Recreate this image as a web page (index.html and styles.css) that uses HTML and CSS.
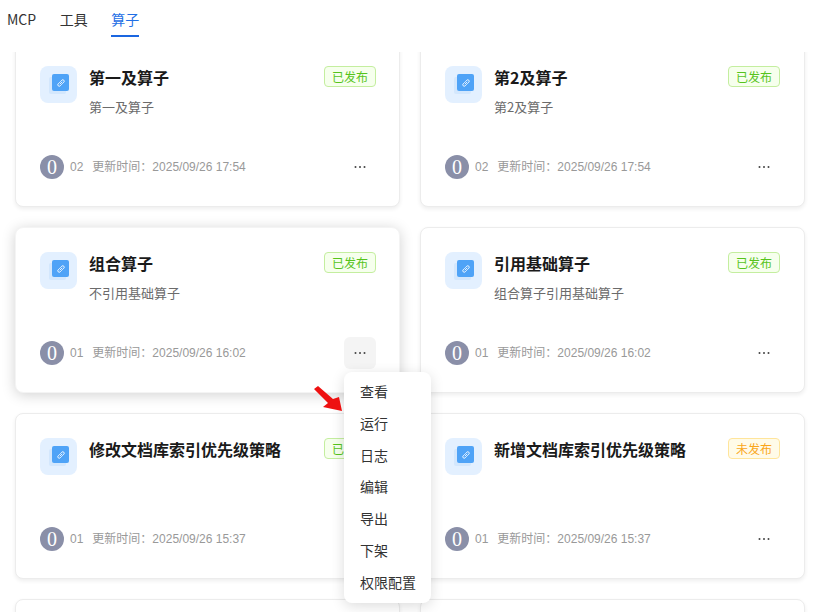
FILE: index.html
```html
<!DOCTYPE html>
<html lang="zh">
<head>
<meta charset="utf-8">
<title>算子</title>
<link rel="stylesheet" href="styles.css">
</head>
<body>
<svg class="defs" width="0" height="0" aria-hidden="true">
  <symbol id="link" viewBox="0 0 12 12">
    <path d="M4.800 7.200 7.200 4.800M4.800 5.200 3.200 6.800a1.400 1.400 0 0 0 2 2L6.800 7.200M7.200 6.800 8.800 5.200a1.400 1.400 0 0 0-2-2L5.200 4.800" fill="none" stroke="#fff" stroke-width="0.900"/>
  </symbol>
  <symbol id="dots" viewBox="0 0 12 4">
    <circle cx="1.500" cy="2" r="1" fill="#444"/>
    <circle cx="6" cy="2" r="1" fill="#444"/>
    <circle cx="10.500" cy="2" r="1" fill="#444"/>
  </symbol>
</svg>
<div class="page">
  <nav class="tabs">
    <span class="tab">MCP</span>
    <span class="tab">工具</span>
    <span class="tab active">算子</span>
  </nav>
  <main class="viewport">
    <div class="grid">
      <article class="card">
        <div class="top">
          <div class="icon"><span class="icon-back"></span><span class="icon-front"><svg width="12" height="12"><use href="#link"/></svg></span></div>
          <div class="info"><h3 class="name">第一及算子</h3><p class="desc">第一及算子</p></div>
          <span class="badge on">已发布</span>
        </div>
        <div class="foot"><span class="avatar">0</span><span class="ver">02</span><span class="time">更新时间：2025/09/26 17:54</span><span class="more"><svg width="12" height="4"><use href="#dots"/></svg></span></div>
      </article>
      <article class="card">
        <div class="top">
          <div class="icon"><span class="icon-back"></span><span class="icon-front"><svg width="12" height="12"><use href="#link"/></svg></span></div>
          <div class="info"><h3 class="name">第2及算子</h3><p class="desc">第2及算子</p></div>
          <span class="badge on">已发布</span>
        </div>
        <div class="foot"><span class="avatar">0</span><span class="ver">02</span><span class="time">更新时间：2025/09/26 17:54</span><span class="more"><svg width="12" height="4"><use href="#dots"/></svg></span></div>
      </article>
      <article class="card hover">
        <div class="top">
          <div class="icon"><span class="icon-back"></span><span class="icon-front"><svg width="12" height="12"><use href="#link"/></svg></span></div>
          <div class="info"><h3 class="name">组合算子</h3><p class="desc">不引用基础算子</p></div>
          <span class="badge on">已发布</span>
        </div>
        <div class="foot"><span class="avatar">0</span><span class="ver">01</span><span class="time">更新时间：2025/09/26 16:02</span><span class="more open"><svg width="12" height="4"><use href="#dots"/></svg></span></div>
      </article>
      <article class="card">
        <div class="top">
          <div class="icon"><span class="icon-back"></span><span class="icon-front"><svg width="12" height="12"><use href="#link"/></svg></span></div>
          <div class="info"><h3 class="name">引用基础算子</h3><p class="desc">组合算子引用基础算子</p></div>
          <span class="badge on">已发布</span>
        </div>
        <div class="foot"><span class="avatar">0</span><span class="ver">01</span><span class="time">更新时间：2025/09/26 16:02</span><span class="more"><svg width="12" height="4"><use href="#dots"/></svg></span></div>
      </article>
      <article class="card">
        <div class="top">
          <div class="icon"><span class="icon-back"></span><span class="icon-front"><svg width="12" height="12"><use href="#link"/></svg></span></div>
          <div class="info"><h3 class="name">修改文档库索引优先级策略</h3><p class="desc"></p></div>
          <span class="badge on">已发布</span>
        </div>
        <div class="foot"><span class="avatar">0</span><span class="ver">01</span><span class="time">更新时间：2025/09/26 15:37</span><span class="more"><svg width="12" height="4"><use href="#dots"/></svg></span></div>
      </article>
      <article class="card">
        <div class="top">
          <div class="icon"><span class="icon-back"></span><span class="icon-front"><svg width="12" height="12"><use href="#link"/></svg></span></div>
          <div class="info"><h3 class="name">新增文档库索引优先级策略</h3><p class="desc"></p></div>
          <span class="badge off">未发布</span>
        </div>
        <div class="foot"><span class="avatar">0</span><span class="ver">01</span><span class="time">更新时间：2025/09/26 15:37</span><span class="more"><svg width="12" height="4"><use href="#dots"/></svg></span></div>
      </article>
      <article class="card"></article>
      <article class="card"></article>
    </div>
  </main>
</div>
<ul class="menu">
  <li>查看</li>
  <li>运行</li>
  <li>日志</li>
  <li>编辑</li>
  <li>导出</li>
  <li>下架</li>
  <li>权限配置</li>
</ul>
<svg class="arrow" width="34" height="32" viewBox="0 0 34 32" aria-hidden="true">
  <path d="M4 7 8 4 23 17 29 15 32 29 13 25 18 21Z" fill="#ee1111"/>
</svg>
</body>
</html>
```
FILE: styles.css
```css
* { box-sizing: border-box; }
html, body { margin: 0; height: 100%; overflow: hidden; background: #fff; }
body {
  position: relative;
  font-family: "Noto Sans CJK SC", "Noto Sans", sans-serif;
  color: #262626;
}
.defs { position: absolute; }
.page { display: flex; flex-direction: column; height: 612px; }
.tabs {
  position: relative;
  z-index: 2;
  flex: none;
  height: 52px;
  padding-left: 7px;
  display: flex;
  gap: 23.5px;
  align-items: flex-start;
  background: #fff;
}
.tab {
  height: 37px;
  padding-top: 9px;
  font-size: 14px;
  line-height: 20px;
  color: #333;
}
.tab.active { color: #1f6fe5; border-bottom: 2px solid #1a66e0; }
.viewport { flex: 1; overflow: hidden; }
.grid {
  margin-top: -11px;
  padding: 0 11px 0 15px;
  display: grid;
  grid-template-columns: 385px 385px;
  grid-auto-rows: 166px;
  gap: 20px;
}
.card {
  padding: 24px 23px 0 24px;
  background: #fff;
  border: 1px solid #ececec;
  border-radius: 8px;
  box-shadow: 0 2px 4px rgba(0, 0, 0, 0.07);
  display: flex;
  flex-direction: column;
}
.card:nth-child(even) { padding-right: 24px; }
.card.hover { border-color: #f4f4f4; box-shadow: 0 2px 14px rgba(0, 0, 0, 0.18); }
.top { display: flex; align-items: flex-start; height: 88px; }
.icon {
  position: relative;
  flex: none;
  width: 37px;
  height: 37px;
  border-radius: 8px;
  background: #e3f0ff;
}
.icon-back {
  position: absolute;
  left: 9px;
  top: 11px;
  width: 17px;
  height: 17px;
  border-radius: 2px;
  background: #d3e7fd;
}
.icon-front {
  position: absolute;
  left: 12px;
  top: 8px;
  width: 17px;
  height: 17px;
  border-radius: 2px;
  background: #4fa3f7;
  display: flex;
  align-items: center;
  justify-content: center;
}
.info { flex: 1; margin-left: 12px; min-width: 0; }
.name {
  margin: -1px 0 0;
  font-size: 16px;
  line-height: 24px;
  font-weight: 700;
  color: #1a1a1a;
}
.desc {
  margin: 8px 0 0;
  font-size: 13px;
  line-height: 20px;
  color: #6b6b6b;
}
.badge {
  flex: none;
  width: 52px;
  height: 21px;
  border-radius: 4px;
  border: 1px solid;
  font-size: 12px;
  line-height: 19px;
  text-align: center;
}
.badge.on { color: #56c41c; background: #f6ffed; border-color: #c4ee9f; }
.badge.off { color: #faa61a; background: #fffbe8; border-color: #ffe59b; }
.foot { display: flex; align-items: center; height: 32px; margin-top: -3px; font-family: "Liberation Sans", "Noto Sans CJK SC", sans-serif; font-size: 12px; line-height: 16px; color: #999; }
.avatar {
  flex: none;
  width: 24px;
  height: 24px;
  border-radius: 50%;
  background: #8a8fa8;
  color: #fff;
  font-family: "Liberation Serif", serif;
  font-size: 20px;
  line-height: 24px;
  text-align: center;
}
.ver { margin-left: 6px; }
.time { margin-left: 9px; margin-bottom: 1px; }
.more {
  margin-left: auto;
  width: 32px;
  height: 32px;
  border-radius: 6px;
  display: flex;
  align-items: center;
  justify-content: center;
}
.more.open { background: #f4f4f4; }
.menu {
  position: absolute;
  z-index: 3;
  left: 344px;
  top: 372px;
  width: 87px;
  height: 231px;
  margin: 0;
  padding: 4px 0;
  list-style: none;
  background: #fff;
  border-radius: 8px;
  box-shadow: 0 3px 14px rgba(0, 0, 0, 0.14);
}
.menu li {
  height: 31.830px;
  padding-left: 16px;
  font-size: 14px;
  line-height: 30px;
  color: #333;
}
.arrow { position: absolute; z-index: 4; left: 310px; top: 382px; }
```
